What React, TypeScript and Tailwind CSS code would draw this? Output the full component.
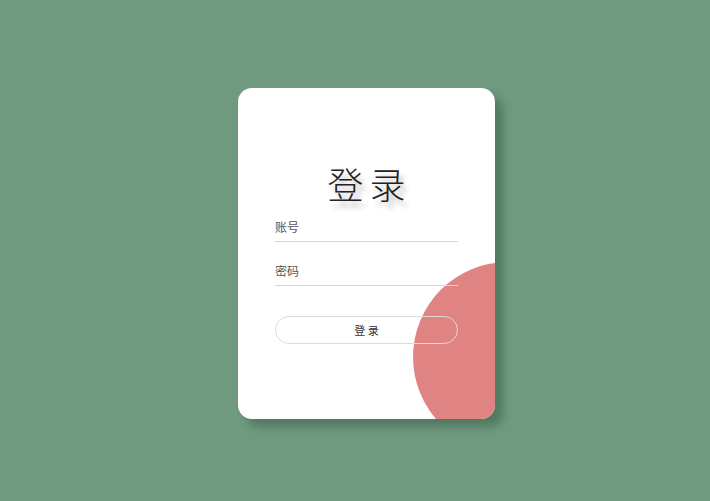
import React from 'react'

const App: React.FC = () => {
  return (
    <div
      className="w-[710px] h-[501px] bg-[#6f9a80] flex items-start justify-center pt-[88px] pl-[23px]"
      style={{ fontFamily: '"Noto Sans CJK SC", "Noto Sans", sans-serif' }}
    >
      <div className="relative w-[257px] h-[331px] bg-white rounded-[14px] overflow-hidden shadow-[8px_8px_8px_rgba(30,60,40,0.35)] flex flex-col items-center">
        <div className="absolute left-[175px] top-[174px] w-[190px] h-[190px] rounded-full bg-[#df8482]" />

        <h1 className="relative mt-[68px] h-[54px] leading-[54px] text-[36px] font-light text-[#222] tracking-[6px] pl-[6px] [text-shadow:4px_6px_5px_rgba(0,0,0,0.25)]">
          登录
        </h1>

        <form className="relative w-[183px] mt-[2px] flex flex-col">
          <input
            type="text"
            placeholder="账号"
            className="h-[30px] w-full border-b border-[#d6d6d6] bg-transparent text-[12px] text-[#555] placeholder-[#555] outline-none"
          />
          <input
            type="password"
            placeholder="密码"
            className="mt-[14px] h-[30px] w-full border-b border-[#d6d6d6] bg-transparent text-[12px] text-[#555] placeholder-[#555] outline-none"
          />
          <button
            type="button"
            className="mt-[30px] h-[28px] w-full rounded-full border border-[#dcdcdc] bg-transparent text-[11px] text-[#333]"
          >
            登 录
          </button>
        </form>
      </div>
    </div>
  )
}

export default App
